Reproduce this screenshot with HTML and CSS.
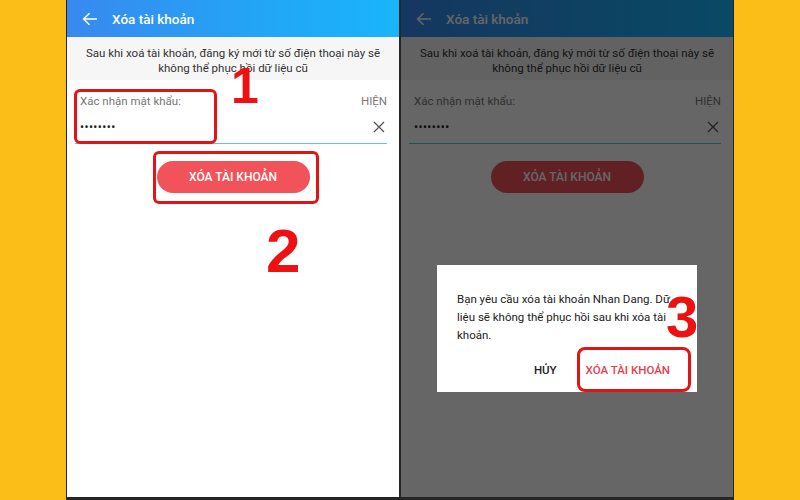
FILE: index.html
```html
<!DOCTYPE html>
<html lang="vi">
<head>
<meta charset="utf-8">
<title>Xóa tài khoản</title>
<link rel="stylesheet" href="styles.css">
</head>
<body>
<div class="frame">
  <section class="phone">
    <header class="appbar">
      <svg class="back" width="16" height="14" viewBox="0 0 16 14"><path d="M15 7H1.8M7.5 1.2L1.6 7l5.9 5.8" fill="none" stroke="#fff" stroke-width="1.5"/></svg>
      <span class="title">Xóa tài khoản</span>
    </header>
    <div class="notice">Sau khi xoá tài khoản, đăng ký mới từ số điện thoại này sẽ<br>không thể phục hồi dữ liệu cũ</div>
    <div class="field">
      <div class="field-row"><span class="label">Xác nhận mật khẩu:</span><span class="show">HIỆN</span></div>
      <div class="field-row input"><span class="dots">••••••••</span>
        <svg class="clear" width="12" height="12" viewBox="0 0 12 12"><path d="M1 1l10 10M11 1L1 11" stroke="#555" stroke-width="1.3"/></svg></div>
    </div>
    <div class="btn-wrap"><span class="btn">XÓA TÀI KHOẢN</span></div>
    <span class="mark box1"></span>
    <span class="mark box2"></span>
    <span class="num n1">1</span>
    <span class="num n2">2</span>
  </section>
  <section class="phone">
    <header class="appbar">
      <svg class="back" width="16" height="14" viewBox="0 0 16 14"><path d="M15 7H1.8M7.5 1.2L1.6 7l5.9 5.8" fill="none" stroke="#fff" stroke-width="1.5"/></svg>
      <span class="title">Xóa tài khoản</span>
    </header>
    <div class="notice">Sau khi xoá tài khoản, đăng ký mới từ số điện thoại này sẽ<br>không thể phục hồi dữ liệu cũ</div>
    <div class="field">
      <div class="field-row"><span class="label">Xác nhận mật khẩu:</span><span class="show">HIỆN</span></div>
      <div class="field-row input"><span class="dots">••••••••</span>
        <svg class="clear" width="12" height="12" viewBox="0 0 12 12"><path d="M1 1l10 10M11 1L1 11" stroke="#555" stroke-width="1.3"/></svg></div>
    </div>
    <div class="btn-wrap"><span class="btn">XÓA TÀI KHOẢN</span></div>
    <div class="scrim"></div>
    <div class="dialog">
      <p class="dialog-text">Bạn yêu cầu xóa tài khoản Nhan Dang. Dữ liệu sẽ không thể phục hồi sau khi xóa tài khoản.</p>
      <div class="dialog-actions"><span class="act cancel">HỦY</span><span class="act confirm">XÓA TÀI KHOẢN</span></div>
    </div>
    <span class="mark box3"></span>
    <span class="num n3">3</span>
  </section>
</div>
</body>
</html>
```
FILE: styles.css
```css
html, body { margin: 0; padding: 0; }
body {
  background: #fbbd18;
  width: 800px;
  height: 500px;
  overflow: hidden;
  font-family: Roboto, "Noto Sans", sans-serif;
}
.frame {
  margin-left: 66px;
  width: 668px;
  height: 500px;
  box-sizing: border-box;
  background: #262626;
  display: flex;
  gap: 2px;
  padding: 0 1px 3px 1px;
}
.phone {
  position: relative;
  width: 332px;
  background: #fff;
  overflow: hidden;
}
.appbar {
  height: 37px;
  background: linear-gradient(90deg, #3889ef 0%, #22a6f6 60%, #19b5fb 100%);
  display: flex;
  align-items: center;
  padding-left: 15px;
  gap: 14px;
}
.title {
  color: #fff;
  font-size: 13.5px;
  font-weight: 500;
}
.notice {
  background: #f6f6f6;
  height: 43px;
  box-sizing: border-box;
  padding-top: 9px;
  text-align: center;
  font-size: 11.5px;
  line-height: 15px;
  color: #333;
}
.field {
  margin: 11px 12px 0 8px;
  border-bottom: 1.5px solid #5ec9d6;
  padding: 0 0 0 5px;
}
.field-row {
  display: flex;
  justify-content: space-between;
  align-items: center;
}
.label, .show {
  font-size: 11.5px;
  color: #777;
  line-height: 20px;
}
.input { height: 32px; padding-right: 2px; }
.dots {
  font-size: 12px;
  letter-spacing: 0.4px;
  color: #222;
}
.btn-wrap {
  display: flex;
  justify-content: center;
  margin-top: 17px;
}
.btn {
  width: 153px;
  height: 32px;
  border-radius: 16px;
  background: #f2525a;
  color: #fff;
  font-size: 12px;
  font-weight: 500;
  display: flex;
  align-items: center;
  justify-content: center;
}
.mark {
  position: absolute;
  border: 3px solid #e21414;
  border-radius: 6px;
  box-sizing: border-box;
}
.box1 { left: 7px; top: 89px; width: 143px; height: 55px; }
.box2 { left: 86px; top: 151px; width: 166px; height: 53px; }
.box3 { left: 176px; top: 347px; width: 114px; height: 45px; border-radius: 8px; }
.num {
  position: absolute;
  color: #ee1111;
  font-family: "Liberation Sans", Arial, sans-serif;
  font-weight: 700;
  line-height: 1;
}
.n1 { left: 164px; top: 61px; font-size: 50px; }
.n2 { left: 199px; top: 220px; font-size: 62px; }
.n3 { left: 265px; top: 288px; font-size: 58px; }
.scrim {
  position: absolute;
  inset: 0;
  background: rgba(0, 0, 0, 0.6);
}
.dialog {
  position: absolute;
  left: 36px;
  top: 265px;
  width: 260px;
  height: 127px;
  background: #fff;
  box-sizing: border-box;
  padding: 25px 16px 0 20px;
}
.dialog-text {
  margin: 0;
  font-size: 11.5px;
  line-height: 18px;
  color: #222;
}
.dialog-actions {
  display: flex;
  justify-content: flex-end;
  gap: 29px;
  margin-top: 19px;
  padding-right: 11px;
}
.act { font-size: 11.5px; font-weight: 500; }
.cancel { color: #222; }
.confirm { color: #e8404e; }
```
